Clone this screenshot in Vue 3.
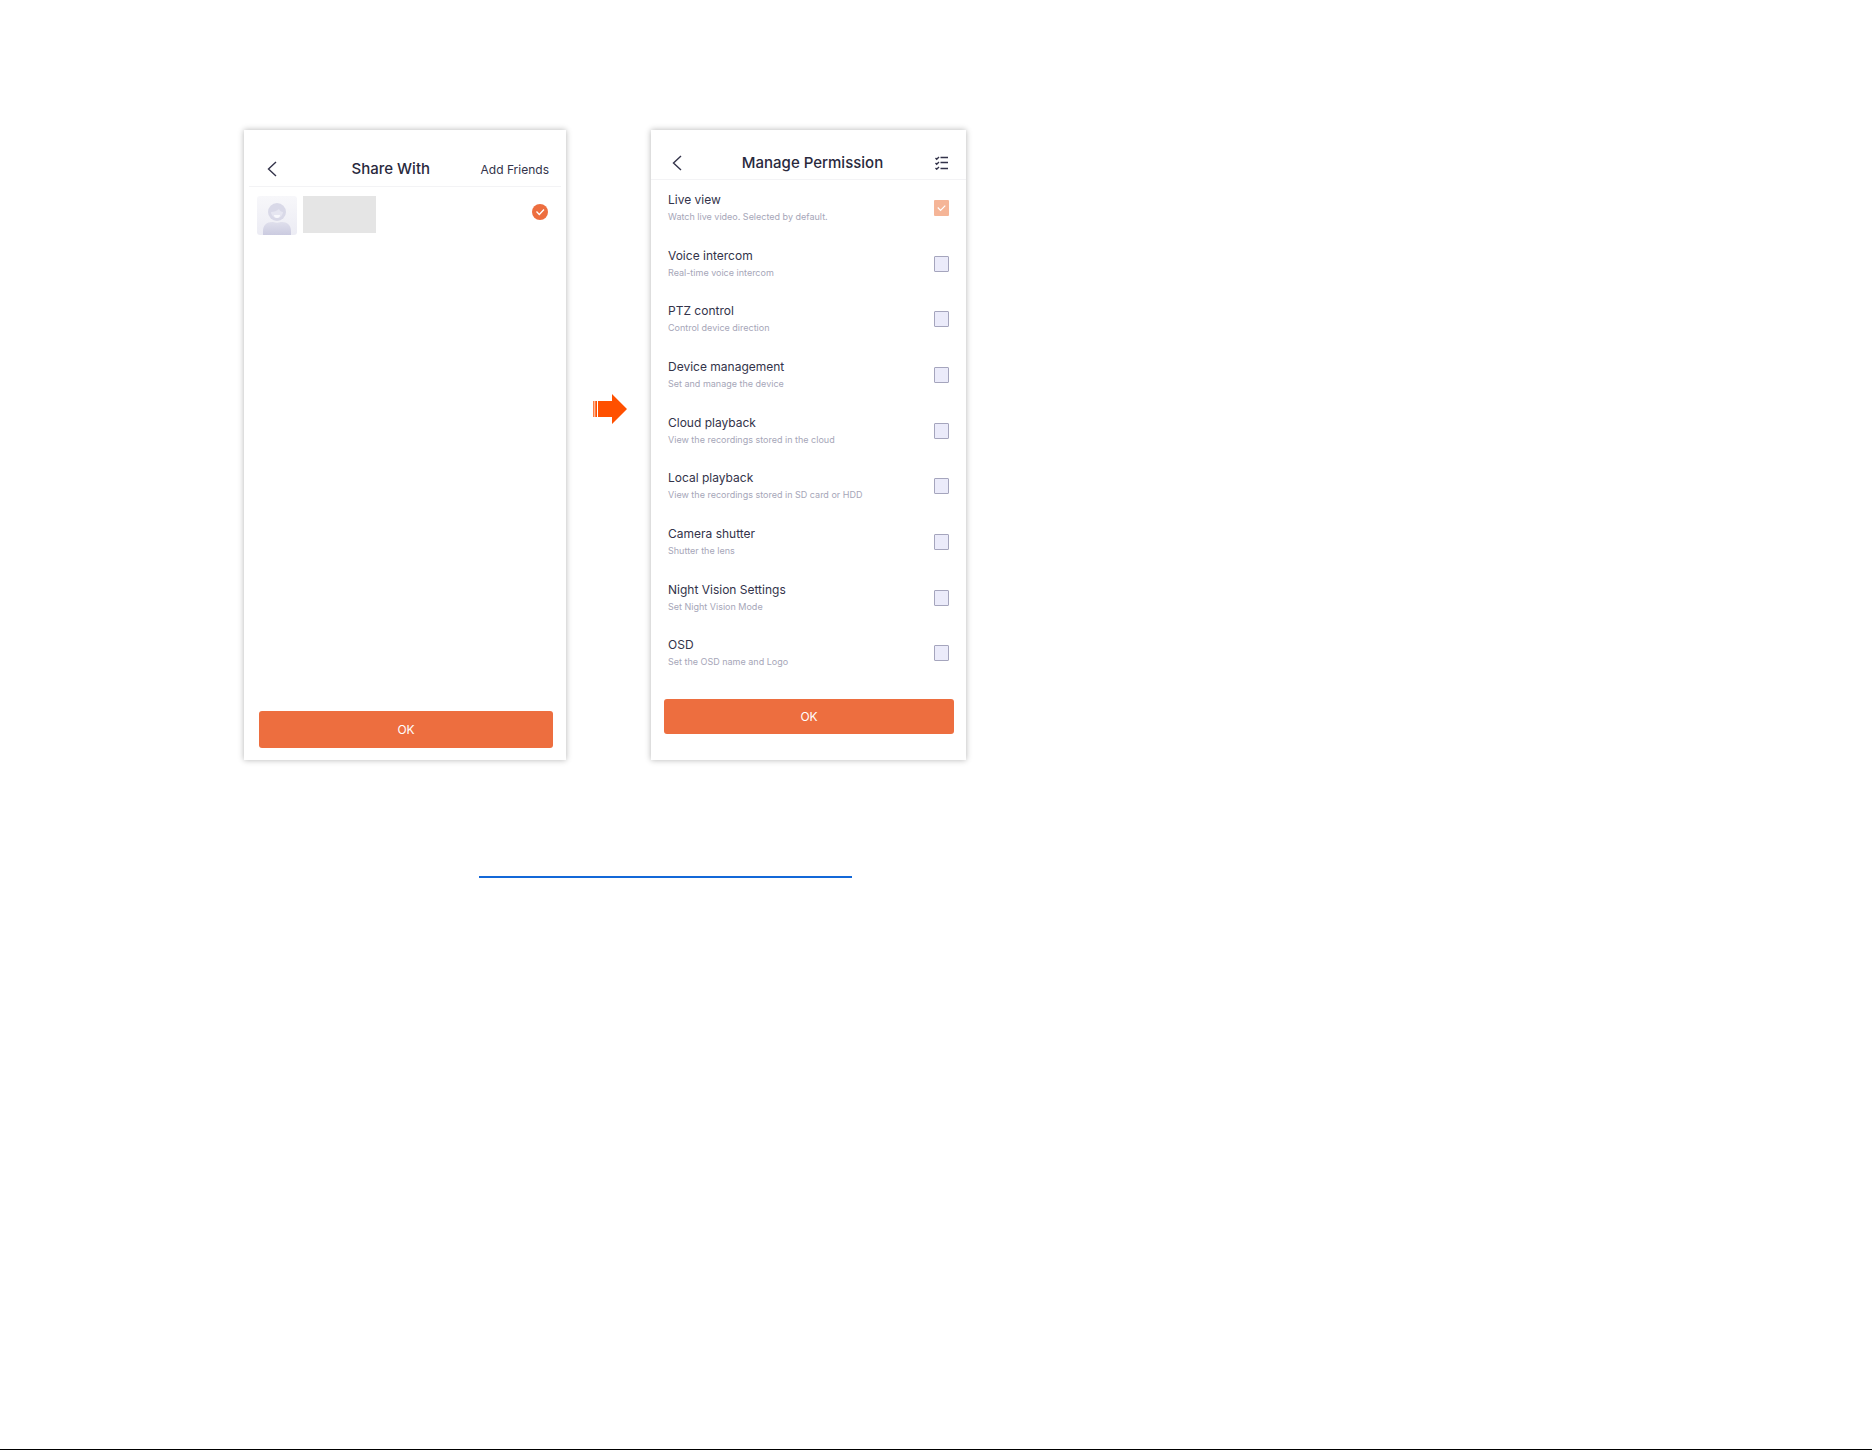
<template>
  <main class="guide">
    <section class="guide__screens">
      <form class="phone phone--share" @submit.prevent>
        <header class="phone__header">
          <button type="button" class="icon-btn" aria-label="Back">
            <svg width="10" height="16" viewBox="0 0 10 16">
              <path d="M9 1 1.5 8 9 15" />
            </svg>
          </button>
          <h2 class="phone__title">Share With</h2>
          <button type="button" class="phone__action">Add Friends</button>
        </header>

        <div class="friend">
          <svg class="friend__avatar" width="40" height="39" viewBox="0 0 40 39">
            <defs>
              <linearGradient id="avatarBg" x1="0" y1="0" x2="0" y2="1">
                <stop offset="0" stop-color="#f7f7fa" />
                <stop offset="1" stop-color="#ececf4" />
              </linearGradient>
              <linearGradient id="avatarBody" x1="0" y1="0" x2="0" y2="1">
                <stop offset="0" stop-color="#dfdfec" />
                <stop offset="1" stop-color="#cbcbe0" />
              </linearGradient>
            </defs>
            <rect width="40" height="39" rx="3" fill="url(#avatarBg)" />
            <path
              d="M6 39v-4c0-6 4-9 9-9h1c3 1 5 1 8 0h1c5 0 9 3 9 9v4z"
              fill="url(#avatarBody)"
            />
            <circle cx="20" cy="16" r="9" fill="#d9d9e8" />
            <path d="M14 16c3 0 6-1 8-3 1 2 2 3 4 3a6 6 0 0 1-12 0z" fill="#e6e6f1" />
            <path d="M17 19h6a3 3 0 0 1-6 0z" fill="#f8f8fc" />
          </svg>
          <span class="friend__name"></span>
          <input
            v-model="friendSelected"
            type="checkbox"
            class="friend__check"
            aria-label="Select friend"
          />
        </div>

        <button type="submit" class="phone__ok">OK</button>
      </form>

      <svg class="guide__arrow" width="34" height="30" viewBox="0 0 34 30">
        <path d="M0 7h1v16H0zM2 7h1v16H2z" opacity=".75" />
        <path d="M1 7h1v16H1z" opacity=".4" />
        <path d="M3 7h1v16H3zM5 7h14V0l15 15-15 15v-7H5z" />
      </svg>

      <form class="phone phone--manage" @submit.prevent>
        <header class="phone__header">
          <button type="button" class="icon-btn" aria-label="Back">
            <svg width="10" height="16" viewBox="0 0 10 16">
              <path d="M9 1 1.5 8 9 15" />
            </svg>
          </button>
          <h2 class="phone__title">Manage Permission</h2>
          <button type="button" class="icon-btn" aria-label="Select all">
            <svg width="14" height="14" viewBox="0 0 14 14">
              <path d="M5.5 1.5H13M5.5 6.5H13M5.5 12.5H13M.5 2l1.2 1.2L4 1M.5 7l1.2 1.2L4 6M.5 12l1.2 1.2L4 11" />
            </svg>
          </button>
        </header>

        <ul class="permissions">
          <li v-for="item in permissions" :key="item.id" class="permissions__item">
            <label class="permissions__text" :for="item.id">
              <span class="permissions__name">{{ item.name }}</span>
              <span class="permissions__desc">{{ item.desc }}</span>
            </label>
            <input
              :id="item.id"
              v-model="item.checked"
              type="checkbox"
              class="permissions__check"
              :disabled="item.locked"
            />
          </li>
        </ul>

        <button type="submit" class="phone__ok">OK</button>
      </form>
    </section>

    <a href="#" class="guide__link" aria-label="More"></a>
  </main>
</template>

<script setup>
import { ref } from "vue";

const friendSelected = ref(true);

const permissions = ref([
  { id: "live", name: "Live view", desc: "Watch live video. Selected by default.", checked: true, locked: true },
  { id: "voice", name: "Voice intercom", desc: "Real-time voice intercom", checked: false },
  { id: "ptz", name: "PTZ control", desc: "Control device direction", checked: false },
  { id: "device", name: "Device management", desc: "Set and manage the device", checked: false },
  { id: "cloud", name: "Cloud playback", desc: "View the recordings stored in the cloud", checked: false },
  { id: "local", name: "Local playback", desc: "View the recordings stored in SD card or HDD", checked: false },
  { id: "shutter", name: "Camera shutter", desc: "Shutter the lens", checked: false },
  { id: "night", name: "Night Vision Settings", desc: "Set Night Vision Mode", checked: false },
  { id: "osd", name: "OSD", desc: "Set the OSD name and Logo", checked: false },
]);
</script>

<style>
body {
  margin: 0;
  background: #fff;
}
</style>

<style scoped>
.guide {
  box-sizing: border-box;
  min-height: 100vh;
  padding: 130px 24px 24px 244px;
  border-bottom: 1px solid #000;
  font-family: Inter, "Liberation Sans", sans-serif;
  color: #33334a;
}
.guide__screens {
  display: flex;
}
.guide__arrow {
  flex: none;
  margin: 264px 24px 0 27px;
  fill: #ff5000;
}
.guide__link {
  display: block;
  max-width: 373px;
  height: 2px;
  margin: 116px 0 0 235px;
  background: #1368d8;
}
.phone {
  display: flex;
  flex-direction: column;
  box-sizing: border-box;
  min-height: 630px;
  background: #fff;
  box-shadow: 0 0 6px rgba(0, 0, 0, 0.3);
}
.phone--share {
  flex: 0 1 322px;
  padding: 0 5px 12px;
}
.phone--manage {
  flex: 0 1 315px;
  padding-bottom: 26px;
}
.phone__header {
  display: flex;
  align-items: center;
  box-sizing: border-box;
  border-bottom: 1px solid #f3f3f5;
}
.phone--share .phone__header {
  height: 57px;
  padding: 22px 12px 0 18px;
}
.phone--manage .phone__header {
  height: 50px;
  padding: 16px 17px 0 21px;
}
.phone__title {
  flex: 1;
  margin: 0;
  padding-left: 8px;
  font-size: 15px;
  font-weight: 500;
  line-height: 20px;
  text-align: center;
  color: #29293d;
}
.phone--share .phone__title {
  padding-left: 24px;
}
.icon-btn,
.phone__action {
  padding: 0;
  border: 0;
  background: none;
  font: inherit;
  color: inherit;
  cursor: pointer;
}
.icon-btn svg {
  display: block;
  fill: none;
  stroke: #33334a;
  stroke-width: 1.4;
}
.phone__action {
  font-size: 12px;
}
.phone__ok {
  height: 35px;
  margin: 18px 12px 0 13px;
  padding: 0;
  border: 0;
  border-radius: 3px;
  background: #ed6e3f;
  font-family: inherit;
  font-size: 12px;
  color: #fff;
  cursor: pointer;
}
.phone--share .phone__ok {
  height: 37px;
  margin: auto 8px 0 10px;
}
.friend {
  display: flex;
  align-items: flex-start;
  padding: 9px 13px 0 8px;
}
.friend__name {
  width: 73px;
  height: 37px;
  margin-left: 6px;
  background: #e5e5e5;
}
.friend__check,
.permissions__check {
  appearance: none;
  flex: none;
  box-sizing: border-box;
  margin: 0;
  background: center / 100% no-repeat;
}
.friend__check {
  width: 16px;
  height: 16px;
  margin: 8px 0 0 auto;
  border: 1px solid #a9a9c0;
  border-radius: 50%;
}
.friend__check:checked {
  border: 0;
  background-color: #ed6e3f;
  background-image: url("data:image/svg+xml,%3Csvg xmlns='http://www.w3.org/2000/svg' viewBox='0 0 16 16'%3E%3Cpath d='M4.5 7.5 7.3 10.5 12 5.5' fill='none' stroke='%23fff' stroke-width='1.3'/%3E%3C/svg%3E");
}
.permissions {
  flex: 1;
  display: flex;
  flex-direction: column;
  margin: 0;
  padding: 0 17px;
  list-style: none;
}
.permissions__item {
  flex: 1;
  display: flex;
  align-items: center;
  justify-content: space-between;
}
.permissions__text {
  display: flex;
  flex-direction: column;
}
.permissions__name {
  font-size: 12px;
  line-height: 18px;
}
.permissions__desc {
  font-size: 9px;
  line-height: 16px;
  color: #a6a6b8;
}
.permissions__check {
  width: 15px;
  height: 16px;
  border: 1px solid #a5a5bd;
  border-radius: 1px;
  background-color: #ebebfa;
}
.permissions__check:checked {
  border: 0;
  background-color: #f5b597;
  background-image: url("data:image/svg+xml,%3Csvg xmlns='http://www.w3.org/2000/svg' viewBox='0 0 16 16'%3E%3Cpath d='M4 8 7 11 12 6' fill='none' stroke='%23fff' stroke-width='1.3'/%3E%3C/svg%3E");
}
</style>
